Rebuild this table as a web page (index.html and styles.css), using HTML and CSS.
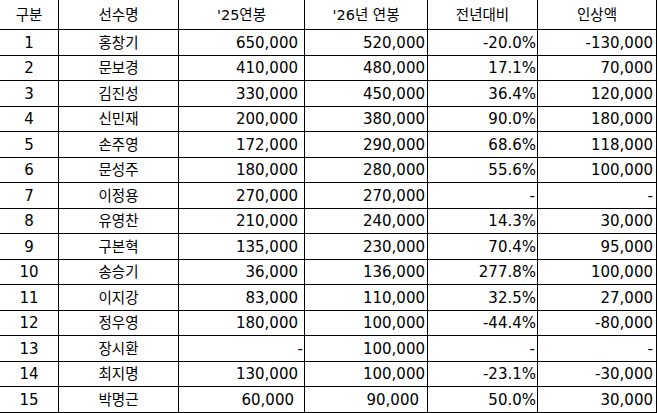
FILE: index.html
```html
<!DOCTYPE html>
<html lang="ko">
<head>
<meta charset="utf-8">
<link rel="stylesheet" href="styles.css">
</head>
<body>
<div class="sheet">
  <div class="c hd">구분</div><div class="c hd">선수명</div><div class="c hd">'25연봉</div><div class="c hd">'26년 연봉</div><div class="c hd">전년대비</div><div class="c hd last">인상액</div>

  <div class="c ctr">1</div><div class="c ctr kr">홍창기</div><div class="c n3">650,000</div><div class="c n4">520,000</div><div class="c n5">-20.0%</div><div class="c n6">-130,000</div>
  <div class="c ctr">2</div><div class="c ctr kr">문보경</div><div class="c n3">410,000</div><div class="c n4">480,000</div><div class="c n5">17.1%</div><div class="c n6">70,000</div>
  <div class="c ctr">3</div><div class="c ctr kr">김진성</div><div class="c n3">330,000</div><div class="c n4">450,000</div><div class="c n5">36.4%</div><div class="c n6">120,000</div>
  <div class="c ctr">4</div><div class="c ctr kr">신민재</div><div class="c n3">200,000</div><div class="c n4">380,000</div><div class="c n5">90.0%</div><div class="c n6">180,000</div>
  <div class="c ctr">5</div><div class="c ctr kr">손주영</div><div class="c n3">172,000</div><div class="c n4">290,000</div><div class="c n5">68.6%</div><div class="c n6">118,000</div>
  <div class="c ctr">6</div><div class="c ctr kr">문성주</div><div class="c n3">180,000</div><div class="c n4">280,000</div><div class="c n5">55.6%</div><div class="c n6">100,000</div>
  <div class="c ctr">7</div><div class="c ctr kr">이정용</div><div class="c n3">270,000</div><div class="c n4">270,000</div><div class="c n5 dash">-</div><div class="c n6">-</div>
  <div class="c ctr">8</div><div class="c ctr kr">유영찬</div><div class="c n3">210,000</div><div class="c n4">240,000</div><div class="c n5">14.3%</div><div class="c n6">30,000</div>
  <div class="c ctr">9</div><div class="c ctr kr">구본혁</div><div class="c n3">135,000</div><div class="c n4">230,000</div><div class="c n5">70.4%</div><div class="c n6">95,000</div>
  <div class="c ctr">10</div><div class="c ctr kr">송승기</div><div class="c n3">36,000</div><div class="c n4">136,000</div><div class="c n5">277.8%</div><div class="c n6">100,000</div>
  <div class="c ctr">11</div><div class="c ctr kr">이지강</div><div class="c n3">83,000</div><div class="c n4">110,000</div><div class="c n5">32.5%</div><div class="c n6">27,000</div>
  <div class="c ctr">12</div><div class="c ctr kr">정우영</div><div class="c n3">180,000</div><div class="c n4">100,000</div><div class="c n5">-44.4%</div><div class="c n6">-80,000</div>
  <div class="c ctr">13</div><div class="c ctr kr">장시환</div><div class="c n3 dash">-</div><div class="c n4">100,000</div><div class="c n5 dash">-</div><div class="c n6">-</div>
  <div class="c ctr">14</div><div class="c ctr kr">최지명</div><div class="c n3">130,000</div><div class="c n4">100,000</div><div class="c n5">-23.1%</div><div class="c n6">-30,000</div>
  <div class="c ctr">15</div><div class="c ctr kr">박명근</div><div class="c n3 sp">60,000</div><div class="c n4 sp">90,000</div><div class="c n5">50.0%</div><div class="c n6">30,000</div>
</div>
</body>
</html>
```

FILE: styles.css
```css
html, body {
  margin: 0;
  padding: 0;
  background: #fff;
}

.sheet {
  display: grid;
  grid-template-columns: 59px 120px 126px 123px 110px 119px;
  grid-template-rows: 30px repeat(7, 26px 25px) 26px;
  width: 657px;
  font-family: "DejaVu Sans", "Noto Sans CJK KR", sans-serif;
  font-size: 15px;
  color: #000;
}

.c {
  box-sizing: border-box;
  border-right: 1px solid #000;
  border-bottom: 1px solid #000;
  display: flex;
  align-items: center;
  justify-content: flex-end;
  white-space: nowrap;
  line-height: 1;
  padding-top: 1px;
}

.hd, .ctr {
  justify-content: center;
}

.kr {
  font-size: 14.5px;
}

.hd {
  font-size: 14.5px;
}

.n3 { padding-right: 6px; }
.n3.dash { padding-right: 1px; }
.n3.sp { padding-right: 10px; }

.n4 { padding-right: 2px; }
.n4.sp { padding-right: 8px; }

.n5 { padding-right: 1px; }
.n5.dash { padding-right: 2px; }

.n6 { padding-right: 3px; }
```
